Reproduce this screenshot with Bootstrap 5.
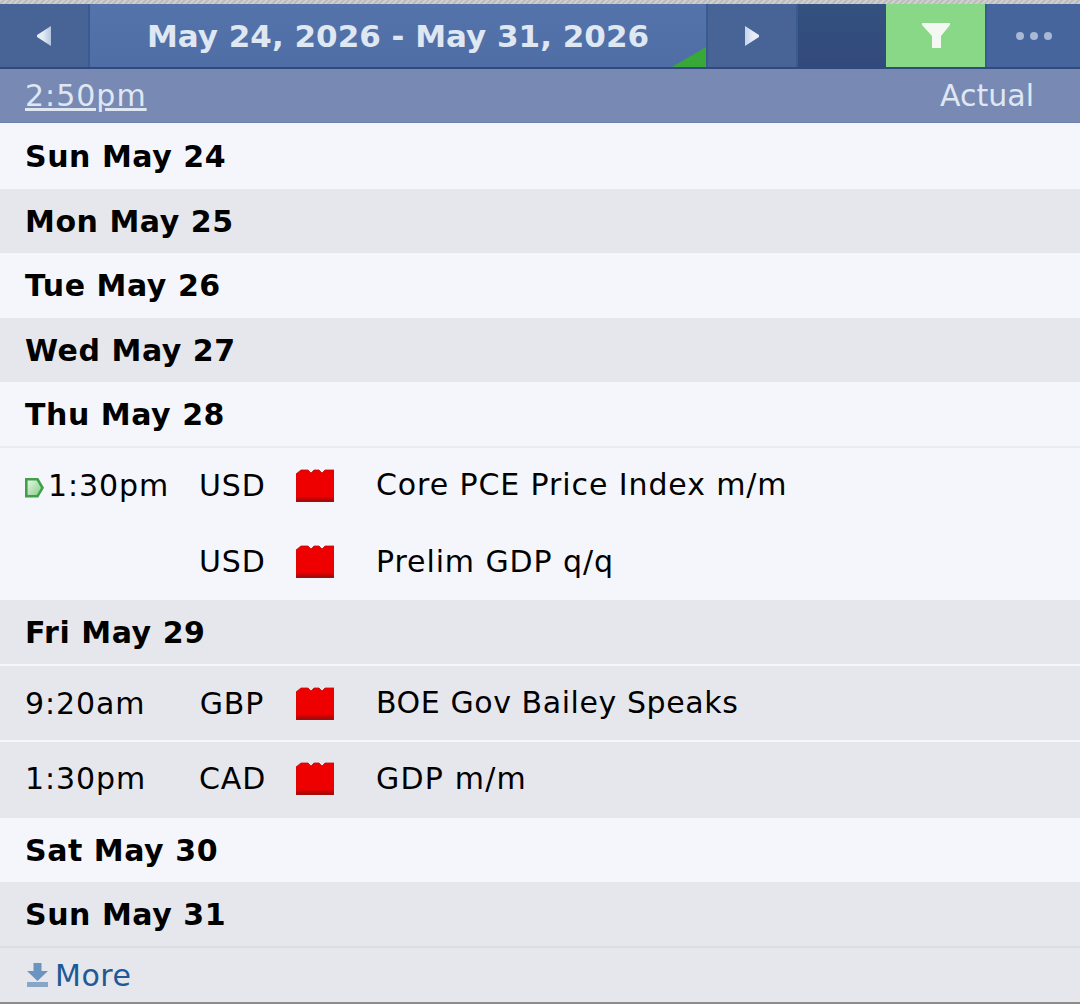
<!DOCTYPE html>
<html lang="en">
  <head>
    <meta charset="UTF-8" />
    <meta name="viewport" content="width=device-width, initial-scale=1.0" />
    <title>Calendar</title>
    <link
      rel="stylesheet"
      href="https://cdn.jsdelivr.net/npm/bootstrap@5.3.0/dist/css/bootstrap.min.css"
    />
    <script src="https://cdn.jsdelivr.net/npm/bootstrap@5.3.0/dist/js/bootstrap.bundle.min.js"></script>
    <style>
      body {
        background: #f4f6fb;
        font-family: "DejaVu Sans", sans-serif;
        font-size: 30px;
        color: #000;
        height: 1004px;
        overflow: hidden;
      }
      .top-strip {
        height: 4px;
        background: repeating-linear-gradient(135deg, #cfcfcf 0 2px, #bdbdbd 2px 4px);
      }
      .cal-head {
        height: 65px;
        border-bottom: 2px solid #2f4a7c;
        background: #4f6fa8;
      }
      .head-btn {
        height: 63px;
        background: #486496;
      }
      .btn-prev {
        width: 90px;
        border-right: 2px solid #3a5b91;
      }
      .btn-next {
        width: 90px;
        border-left: 2px solid #3a5b91;
      }
      .head-title {
        width: 616px;
        height: 63px;
        color: #dfe7f3;
        font-size: 31px;
        font-weight: 700;
        padding-top: 2px;
        background: linear-gradient(#5473aa, #4f6ea6);
      }
      .corner-mark {
        position: absolute;
        right: 0;
        bottom: 0;
      }
      .head-blank {
        width: 90px;
        height: 63px;
        background: linear-gradient(#34517f, #314a7b);
        border-left: 2px solid #3a5b91;
      }
      .btn-filter {
        width: 99px;
        height: 63px;
        background: #88d888;
      }
      .btn-more {
        width: 95px;
        height: 63px;
        background: #46659c;
        border-left: 2px solid #3a5b91;
      }
      .sub-head {
        height: 54px;
        background: #788ab3;
        border-bottom: 1px solid #6b80ab;
        color: #dfe7f3;
        padding: 0 46px 0 25px;
      }
      .sub-head a {
        color: #dfe7f3;
        letter-spacing: 1px;
      }
      .day-row {
        height: 64px;
        padding-left: 25px;
        font-weight: 700;
        letter-spacing: 0.55px;
      }
      .day-first {
        height: 66px;
      }
      .day-mid {
        height: 65px;
      }
      .shade {
        background: #e6e7ed;
      }
      .light {
        background: #f4f6fb;
      }
      .event-row {
        height: 77px;
        padding-left: 25px;
        letter-spacing: 0.9px;
      }
      .line-top {
        border-top: 2px solid #e9ebf0;
      }
      .line-pale {
        border-top: 2px solid #f4f6fb;
      }
      .ev-gbp {
        height: 76px;
      }
      .ev-cad {
        height: 78px;
        padding-bottom: 3px;
      }
      .ev-time {
        width: 174px;
        flex: none;
      }
      .ev-mark {
        margin-right: 3px;
        margin-top: 4px;
      }
      .ev-cur {
        width: 66px;
        flex: none;
        text-align: center;
        white-space: nowrap;
      }
      .ev-impact {
        width: 80px;
        flex: none;
        margin-left: 31px;
      }
      .ev-name {
        padding-bottom: 2px;
      }
      .ev-tight {
        letter-spacing: 0.57px;
      }
      .ev-wide {
        letter-spacing: 1.2px;
      }
      .more-row {
        height: 56px;
        padding-left: 27px;
        background: #e6e7ed;
        border-top: 2px solid #dcdde2;
        letter-spacing: 0.5px;
      }
      .more-row a {
        color: #1f5a96;
        text-decoration: none;
      }
      .more-icon {
        margin-right: 7px;
      }
      .bottom-strip {
        height: 2px;
        background: #8c8c8c;
      }
    </style>
  </head>
  <body>
    <div class="top-strip"></div>

    <!-- Header -->
    <div class="cal-head d-flex">
      <div class="head-btn btn-prev d-flex align-items-center justify-content-center">
        <svg width="16" height="22" viewBox="0 0 16 22">
          <defs>
            <linearGradient id="arrowLeft" x1="0" y1="0" x2="1" y2="0">
              <stop offset="0.4" stop-color="#e6edf7" />
              <stop offset="1" stop-color="#b4c6e0" />
            </linearGradient>
            <linearGradient id="arrowRight" x1="0" y1="0" x2="1" y2="0">
              <stop offset="0" stop-color="#c4d4ea" />
              <stop offset="0.6" stop-color="#e6edf7" />
            </linearGradient>
          </defs>
          <path d="M15 1V21L1 12V10Z" fill="url(#arrowLeft)" />
        </svg>
      </div>
      <div class="head-title position-relative d-flex align-items-center justify-content-center">
        May 24, 2026 - May 31, 2026
        <svg class="corner-mark" width="34" height="20" viewBox="0 0 34 20"><path d="M34 0V20H0Z" fill="#38a838" /></svg>
      </div>
      <div class="head-btn btn-next d-flex align-items-center justify-content-center">
        <svg width="16" height="22" viewBox="0 0 16 22"><path d="M1 1V21L15 12V10Z" fill="url(#arrowRight)" /></svg>
      </div>
      <div class="head-blank"></div>
      <div class="btn-filter d-flex align-items-center justify-content-center">
        <svg width="28" height="25" viewBox="0 0 28 25"><path d="M0 0H28V2L19 13V25H10V13L0 2Z" fill="#f3f8f3" /></svg>
      </div>
      <div class="btn-more d-flex align-items-center justify-content-center">
        <svg width="38" height="10" viewBox="0 0 38 10">
          <circle cx="5" cy="5" r="4" fill="#a9b8d4" />
          <circle cx="19" cy="5" r="4" fill="#a9b8d4" />
          <circle cx="33" cy="5" r="4" fill="#a9b8d4" />
        </svg>
      </div>
    </div>

    <div class="sub-head d-flex align-items-center justify-content-between">
      <a href="#">2:50pm</a>
      <span>Actual</span>
    </div>

    <!-- Calendar rows -->
    <div class="day-row day-first light d-flex align-items-center">Sun May 24</div>
    <div class="day-row shade d-flex align-items-center">Mon May 25</div>
    <div class="day-row day-mid light d-flex align-items-center">Tue May 26</div>
    <div class="day-row shade d-flex align-items-center">Wed May 27</div>
    <div class="day-row light d-flex align-items-center">Thu May 28</div>

    <div class="event-row light line-top d-flex align-items-center">
      <div class="ev-time d-flex align-items-center">
        <svg width="20" height="20" viewBox="0 0 20 20" class="ev-mark">
          <defs>
            <linearGradient id="nextFill" x1="0" y1="0" x2="1" y2="1">
              <stop offset="0" stop-color="#eef8ee" />
              <stop offset="1" stop-color="#7ccc7c" />
            </linearGradient>
          </defs>
          <path d="M1.300 1.300H12.500L17.500 9.800L12.500 18.300H1.300Z" fill="url(#nextFill)" stroke="#3f9f4a" stroke-width="2.600" />
        </svg>1:30pm
      </div>
      <div class="ev-cur">USD</div>
      <div class="ev-impact">
        <svg class="d-block" width="38" height="33" viewBox="0 0 38 33">
          <use href="#folderIcon" />
        </svg>
      </div>
      <div class="ev-name">Core PCE Price Index m/m</div>
    </div>
    <div class="event-row light d-flex align-items-center">
      <div class="ev-time"></div>
      <div class="ev-cur">USD</div>
      <div class="ev-impact">
        <svg class="d-block" width="38" height="33" viewBox="0 0 38 33">
          <use href="#folderIcon" />
        </svg>
      </div>
      <div>Prelim GDP q/q</div>
    </div>

    <div class="day-row shade d-flex align-items-center">Fri May 29</div>

    <div class="event-row ev-gbp shade line-pale d-flex align-items-center">
      <div class="ev-time">9:20am</div>
      <div class="ev-cur">GBP</div>
      <div class="ev-impact">
        <svg class="d-block" width="38" height="33" viewBox="0 0 38 33">
          <use href="#folderIcon" />
        </svg>
      </div>
      <div class="ev-name ev-tight">BOE Gov Bailey Speaks</div>
    </div>
    <div class="event-row ev-cad shade line-pale d-flex align-items-center">
      <div class="ev-time">1:30pm</div>
      <div class="ev-cur">CAD</div>
      <div class="ev-impact">
        <svg class="d-block" width="38" height="33" viewBox="0 0 38 33">
          <use href="#folderIcon" />
        </svg>
      </div>
      <div class="ev-wide">GDP m/m</div>
    </div>

    <div class="day-row light d-flex align-items-center">Sat May 30</div>
    <div class="day-row shade d-flex align-items-center">Sun May 31</div>

    <div class="more-row d-flex align-items-center">
      <svg width="21" height="24" viewBox="0 0 21 24" class="more-icon">
        <path d="M6.500 0H14.500V8H21L10.500 18L0 8H6.500Z" fill="#6b94c0" />
        <rect x="0" y="19" width="21" height="5" fill="#8aa6c6" />
      </svg>
      <a href="#">More</a>
    </div>
    <div class="bottom-strip"></div>

    <svg width="0" height="0" class="d-block">
      <defs>
        <linearGradient id="redFill" x1="0" y1="0" x2="0" y2="1">
          <stop offset="0" stop-color="#ee0000" />
          <stop offset="0.82" stop-color="#ee0000" />
          <stop offset="1" stop-color="#8c0c0c" />
        </linearGradient>
        <path id="folderIcon" d="M0 33V5L5 1H12L15 4L18 1H23L26 4L29 1H38V33Z" fill="url(#redFill)" stroke="#c80a0a" stroke-width="0.800" />
      </defs>
    </svg>
  </body>
</html>
